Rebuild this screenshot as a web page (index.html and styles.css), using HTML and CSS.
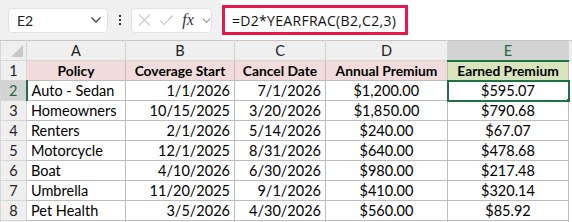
FILE: index.html
```html
<!DOCTYPE html>
<html lang="en">
<head>
  <meta charset="UTF-8">
  <title>Earned Premium</title>
  <link rel="stylesheet" href="styles.css">
</head>
<body>
  <!-- Formula Bar -->
  <div class="formula-bar">
    <div class="name-box">
      <span>E2</span>
      <svg class="chevron" width="12" height="8" viewBox="0 0 12 8"><path d="M1.5 1.5 L6 6 L10.5 1.5" fill="none" stroke="#444" stroke-width="1.3"/></svg>
    </div>
    <div class="dots"><i></i><i></i><i></i></div>
    <div class="fx-box">
      <svg width="14" height="14" viewBox="0 0 14 14"><path d="M1 1 L13 13 M13 1 L1 13" stroke="#c4c4c4" stroke-width="1.2"/></svg>
      <svg width="16" height="14" viewBox="0 0 16 14"><path d="M1 7.5 L5.5 12 L15 2" fill="none" stroke="#c4c4c4" stroke-width="1.2"/></svg>
      <span class="fx">fx</span>
      <svg width="10" height="7" viewBox="0 0 10 7"><path d="M1 1.5 L5 5.5 L9 1.5" fill="none" stroke="#888" stroke-width="1.1"/></svg>
    </div>
    <div class="formula-input">
      <div class="formula-text">=D2*YEARFRAC(B2,C2,3)</div>
    </div>
  </div>

  <!-- Sheet -->
  <table class="sheet">
    <colgroup>
      <col class="c-row"><col class="c-a"><col class="c-b"><col class="c-c"><col class="c-d"><col class="c-e"><col>
    </colgroup>
    <thead>
      <tr>
        <th class="corner"><span class="tri"></span></th>
        <th>A</th><th>B</th><th>C</th><th>D</th><th class="sel">E</th><th class="rest"></th>
      </tr>
    </thead>
    <tbody>
      <tr class="head">
        <th>1</th>
        <td>Policy</td><td>Coverage Start</td><td>Cancel Date</td><td>Annual Premium</td><td class="green">Earned Premium</td><td class="rest"></td>
      </tr>
      <tr>
        <th class="sel-row">2</th>
        <td class="l">Auto - Sedan</td><td class="r">1/1/2026</td><td class="r">7/1/2026</td><td>$1,200.00</td><td class="active">$595.07<span class="handle"></span></td><td class="rest"></td>
      </tr>
      <tr>
        <th>3</th>
        <td class="l">Homeowners</td><td class="r">10/15/2025</td><td class="r">3/20/2026</td><td>$1,850.00</td><td>$790.68</td><td class="rest"></td>
      </tr>
      <tr>
        <th>4</th>
        <td class="l">Renters</td><td class="r">2/1/2026</td><td class="r">5/14/2026</td><td>$240.00</td><td>$67.07</td><td class="rest"></td>
      </tr>
      <tr>
        <th>5</th>
        <td class="l">Motorcycle</td><td class="r">12/1/2025</td><td class="r">8/31/2026</td><td>$640.00</td><td>$478.68</td><td class="rest"></td>
      </tr>
      <tr>
        <th>6</th>
        <td class="l">Boat</td><td class="r">4/10/2026</td><td class="r">6/30/2026</td><td>$980.00</td><td>$217.48</td><td class="rest"></td>
      </tr>
      <tr>
        <th>7</th>
        <td class="l">Umbrella</td><td class="r">11/20/2025</td><td class="r">9/1/2026</td><td>$410.00</td><td>$320.14</td><td class="rest"></td>
      </tr>
      <tr>
        <th>8</th>
        <td class="l">Pet Health</td><td class="r">3/5/2026</td><td class="r">4/30/2026</td><td>$560.00</td><td>$85.92</td><td class="rest"></td>
      </tr>
      <tr class="cut">
        <th></th><td></td><td></td><td></td><td></td><td></td><td class="rest"></td>
      </tr>
    </tbody>
  </table>
</body>
</html>
```

FILE: styles.css
```css
/* Reset */
* {
  margin: 0;
  padding: 0;
  box-sizing: border-box;
}

body {
  width: 572px;
  height: 222px;
  overflow: hidden;
  background: #fff;
  font-family: 'Lato', 'Liberation Sans', sans-serif;
  color: #000;
}

/* Formula Bar */
.formula-bar {
  height: 40px;
  background: #f0f0f0;
  display: flex;
  align-items: center;
  padding-left: 8px;
}

.name-box {
  width: 100px;
  height: 25px;
  background: #fff;
  border: 1px solid #e2e2e2;
  border-radius: 4px;
  display: flex;
  align-items: center;
  justify-content: space-between;
  padding: 0 5px 0 8px;
  font-size: 14px;
  color: #222;
}

.dots {
  width: 23px;
  display: flex;
  flex-direction: column;
  align-items: center;
  gap: 2px;
}

.dots i {
  width: 2px;
  height: 2px;
  background: #333;
}

.fx-box {
  width: 81px;
  height: 25px;
  background: #fff;
  border: 1px solid #e2e2e2;
  border-radius: 4px;
  display: flex;
  align-items: center;
  gap: 8px;
  padding-left: 6px;
}

.fx-box .fx {
  font-family: 'Liberation Serif', serif;
  font-style: italic;
  font-size: 16px;
  color: #333;
  margin-left: 1px;
}

.formula-input {
  flex: 1;
  height: 40px;
  margin-left: 9px;
  background: #fff;
  display: flex;
  align-items: center;
}

.formula-text {
  height: 30px;
  width: 186px;
  border: 3px solid #e8174c;
  display: flex;
  align-items: center;
  padding-left: 7px;
  font-family: 'Open Sans', sans-serif;
  font-size: 14px;
  letter-spacing: 0.3px;
  color: #111;
  margin-left: 1px;
}

/* Sheet */
.sheet {
  border-collapse: collapse;
  table-layout: fixed;
  width: 600px;
  font-size: 14.5px;
}

.c-row { width: 26px; }
.c-a { width: 99px; }
.c-b { width: 109px; }
.c-c { width: 91px; }
.c-d { width: 122px; }
.c-e { width: 121px; }

.sheet th,
.sheet td {
  height: 20px;
  border: 1px solid #bdbdbd;
  padding: 0 4px;
  white-space: nowrap;
  overflow: hidden;
  text-align: center;
}

.sheet thead th {
  height: 20px;
  background: #efefef;
  font-weight: normal;
  color: #222;
  border-color: #d6d6d6;
  border-top-color: #c6c6c6;
}

.sheet thead th.sel {
  background: #d3d3d3;
  color: #1e6b41;
  border-bottom: 2px solid #1e7145;
}

.sheet .corner {
  position: relative;
}

.tri {
  position: absolute;
  right: 3px;
  bottom: 3px;
  width: 0;
  height: 0;
  border-left: 12px solid transparent;
  border-bottom: 12px solid #c8c8c8;
}

.sheet tbody th {
  background: #efefef;
  font-weight: normal;
  color: #222;
  border-color: #d6d6d6;
}

.sheet tbody th.sel-row {
  background: #d3d3d3;
  color: #1e6b41;
  border-right: 2px solid #1e7145;
}

.head td {
  background: #f2dcdb;
  font-weight: bold;
  font-size: 13.8px;
}

.head td.green {
  background: #d8e4bc;
}

td.l { text-align: left; }
td.r { text-align: right; }

td.active {
  position: relative;
  border: 2px solid #1e7145;
}

.handle {
  position: absolute;
  right: -4px;
  bottom: -4px;
  width: 6px;
  height: 6px;
  background: #1e7145;
  border: 1px solid #fff;
}

.sheet td.rest {
  border: none;
  border-left: 1px solid #bdbdbd;
  background: #fff;
}

.sheet thead th.rest {
  background: #efefef;
  border-left-color: #d6d6d6;
}

.cut td,
.cut th {
  height: 2px;
  border-bottom: none;
}
```
